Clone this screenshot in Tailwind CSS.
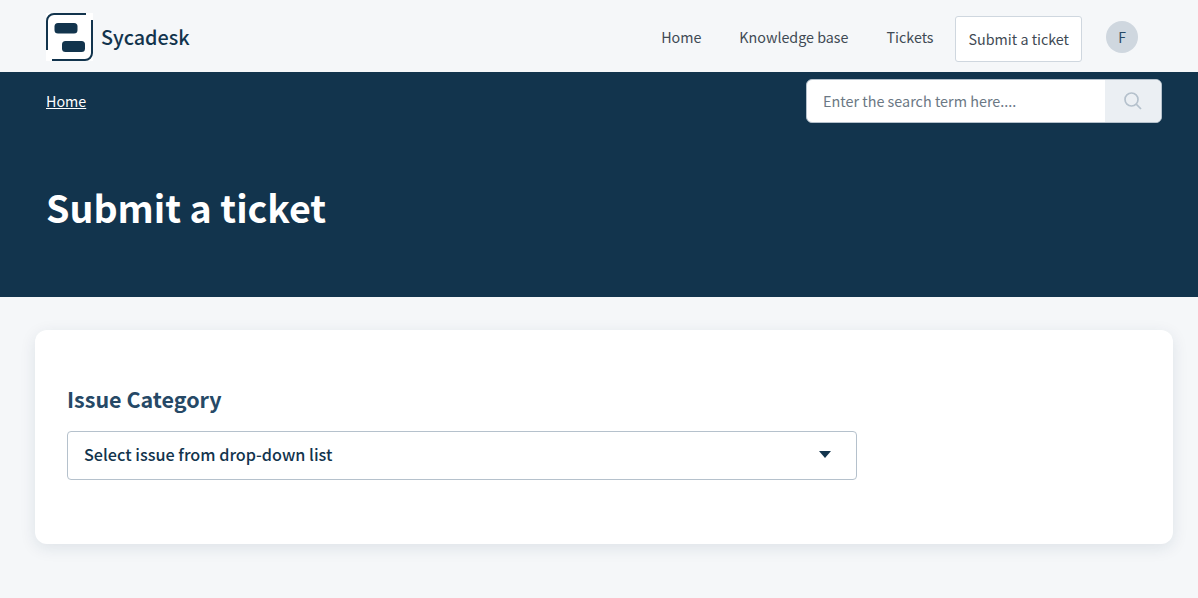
<!DOCTYPE html>
<html lang="en">
<head>
<meta charset="utf-8">
<title>Submit a ticket</title>
<script src="https://cdn.jsdelivr.net/npm/@tailwindcss/browser@4"></script>
</head>
<body class="bg-[#f5f7f9] font-['Noto_Sans_CJK_SC','Liberation_Sans',sans-serif] h-[598px] overflow-hidden">
<header class="h-[72px] flex items-center justify-between pl-[46px] pr-[60px]">
  <a class="flex items-center gap-[8px]">
    <svg class="w-[47px] h-[48px] mt-[1px]" viewBox="0 0 47 48" fill="none">
      <rect width="47" height="48" fill="#fff"/>
      <path d="M1 37V8a7 7 0 0 1 7-7h32" stroke="#12344d" stroke-width="2"/>
      <path d="M46 7v33a7 7 0 0 1-7 7H6" stroke="#12344d" stroke-width="2"/>
      <rect x="8.500" y="10" width="23" height="10.500" rx="3.500" fill="#12344d"/>
      <rect x="16" y="28" width="23" height="11" rx="3.500" fill="#12344d"/>
    </svg>
    <span class="text-[19.8px] leading-[28px] font-medium text-[#12344d] mt-[1px]">Sycadesk</span>
  </a>
  <nav class="flex items-center text-[14.3px] leading-[22px] text-[#3f4a54]">
    <a class="mt-[2px] mr-[38px]">Home</a>
    <a class="mt-[2px] mr-[38px]">Knowledge base</a>
    <a class="mt-[2px] mr-[21px]">Tickets</a>
    <a class="mt-[6px] h-[46px] pl-[13px] pr-[12px] flex items-center bg-white border border-[#cfd7df] rounded-[3px] text-[#3f4a54]">Submit a ticket</a>
    <span class="mt-[2px] ml-[24px] w-[32px] h-[32px] rounded-full bg-[#cfd7df] flex items-center justify-center text-[14px] text-[#264966]">F</span>
  </nav>
</header>
<section class="h-[225px] bg-[#12344d] pl-[46px] pr-[36px]">
  <div class="flex justify-between pt-[7px]">
    <a class="mt-[11px] text-[14.3px] leading-[22px] text-white underline">Home</a>
    <div class="flex w-[356px] h-[44px] rounded-[6px] border border-[#b5c1cc] bg-white overflow-hidden">
      <div class="flex-1 pl-[16px] flex items-center text-[14.4px] text-[#6b7884]">Enter the search term here....</div>
      <div class="w-[56px] bg-[#ebeff3] flex items-center justify-center">
        <svg class="w-[18px] h-[18px]" viewBox="0 0 18 18" fill="none" stroke="#b5c1cc" stroke-width="1.700"><circle cx="7.500" cy="7.500" r="6.500"/><path d="M12.200 12.200 17 17"/></svg>
      </div>
    </div>
  </div>
  <h1 class="mt-[55px] text-[37.6px] leading-[58px] font-bold text-white">Submit a ticket</h1>
</section>
<main class="mt-[33px] ml-[35px] w-[1138px] h-[214px] bg-white rounded-[12px] shadow-[0_4px_16px_rgba(18,52,77,0.10)] pt-[53px] pl-[32px]">
  <h2 class="text-[21.5px] leading-[32px] font-bold text-[#264966]">Issue Category</h2>
  <div class="mt-[16px] w-[790px] h-[49px] pl-[16px] pr-[25px] flex items-center justify-between border border-[#b5c1cc] rounded-[4px] bg-white">
    <span class="text-[16.2px] leading-[22px] font-medium text-[#12344d] -mt-[3px]">Select issue from drop-down list</span>
    <svg class="w-[12px] h-[7px] -mt-[3px]" viewBox="0 0 12 7"><path d="M0 0h12L6 7z" fill="#12344d"/></svg>
  </div>
</main>
</body>
</html>
